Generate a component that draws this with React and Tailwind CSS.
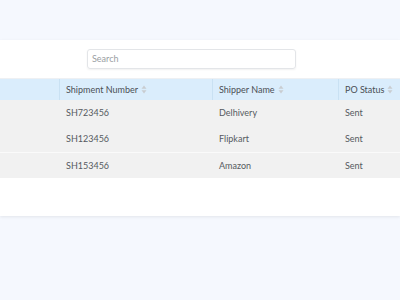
import React from "react";

const SortIcon = () => (
  <svg width="6" height="9" viewBox="0 0 6 9" className="ml-[3px] inline-block">
    <path d="M3 0.5 L5.5 3.8 L0.5 3.8 Z" fill="#c9ccd1" />
    <path d="M3 8.5 L5.5 5.2 L0.5 5.2 Z" fill="#c9ccd1" />
  </svg>
);

const rows = [
  ["SH723456", "Delhivery", "Sent"],
  ["SH123456", "Flipkart", "Sent"],
  ["SH153456", "Amazon", "Sent"],
];

export default function App() {
  return (
    <div className="w-[400px] h-[300px] overflow-hidden bg-[#f5f8fe] pt-[40px] text-[#555a60]" style={{ fontFamily: "Lato, 'Open Sans', sans-serif" }}>
      <div className="w-[400px] bg-white shadow-[0_1px_3px_rgba(0,0,0,0.08)] pb-[38px]">
        <div className="h-[39px] flex items-center pl-[87px] border-b border-[#eef0f3]">
          <div className="w-[209px] h-[20px] rounded-[3px] border border-[#e3e5e8] shadow-[0_1px_2px_rgba(0,0,0,0.06)] flex items-center px-[4px] text-[9px] text-[#9a9ea3]">
            Search
          </div>
        </div>
        <div className="flex h-[21px] bg-[#daedfc] text-[9px] text-[#4a4f55] items-stretch">
          <div className="w-[60px] border-r border-[#c9e1f3]"></div>
          <div className="w-[153px] border-r border-[#c9e1f3] flex items-center pl-[6px]">Shipment Number<SortIcon /></div>
          <div className="w-[126px] border-r border-[#c9e1f3] flex items-center pl-[6px]">Shipper Name<SortIcon /></div>
          <div className="flex-1 flex items-center pl-[6px]">PO Status<SortIcon /></div>
        </div>
        {rows.map((r, i) => (
          <div key={i} className={"flex h-[26px] bg-[#f1f1f1] text-[9px] text-[#555a60] items-center " + (i === 2 ? "border-t border-[#fafafa]" : "")}>
            <div className="w-[60px]"></div>
            <div className="w-[153px] pl-[6px]">{r[0]}</div>
            <div className="w-[126px] pl-[6px]">{r[1]}</div>
            <div className="flex-1 pl-[6px]">{r[2]}</div>
          </div>
        ))}
      </div>
    </div>
  );
}
